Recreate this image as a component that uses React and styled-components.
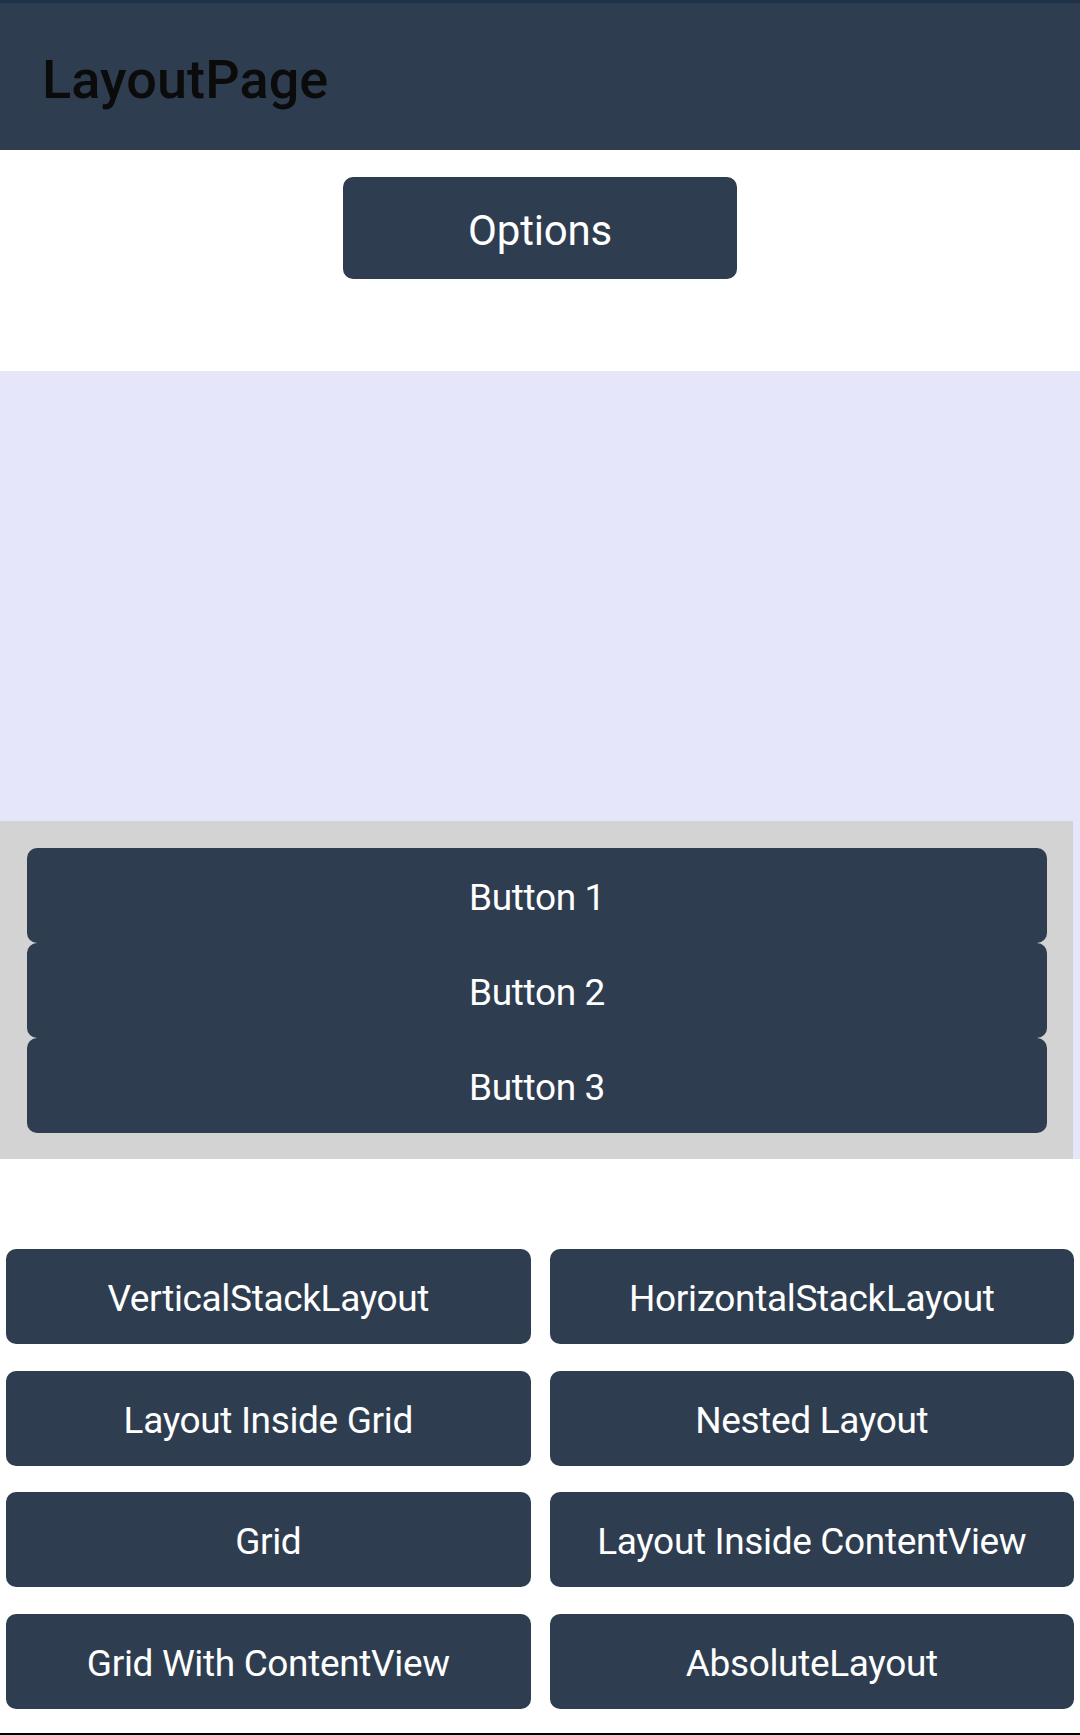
import React from "react";
import styled, { createGlobalStyle } from "styled-components";

const GlobalStyle = createGlobalStyle`
  html, body {
    margin: 0;
    padding: 0;
    background: #ffffff;
    font-family: Roboto, "Noto Sans", "Liberation Sans", sans-serif;
  }
  * { box-sizing: border-box; }
`;

const Page = styled.div`
  width: 1080px;
  height: 1735px;
  display: flex;
  flex-direction: column;
  background: #ffffff;
  overflow: hidden;
`;

const StatusStrip = styled.div`
  height: 3px;
  background: #1d3249;
  flex-shrink: 0;
`;

const Header = styled.header`
  height: 147px;
  flex-shrink: 0;
  background: #2e3e50;
  display: flex;
  align-items: center;
  padding-left: 42px;
  padding-top: 6px;
`;

const Title = styled.h1`
  margin: 0;
  font-size: 54px;
  font-weight: 500;
  color: #0b0b0b;
  letter-spacing: 0.1px;
  line-height: 1;
`;

const OptionsRow = styled.div`
  display: flex;
  justify-content: center;
  padding-top: 27px;
`;

const ActionButton = styled.button`
  border: none;
  margin: 0;
  padding: 4px 0 0 0;
  background: #2e3e50;
  color: #ffffff;
  font-family: Roboto, "Noto Sans", "Liberation Sans", sans-serif;
  font-size: ${(p) => p.$size || 37}px;
  letter-spacing: ${(p) => (p.$size ? "-0.2px" : "-0.35px")};
  font-weight: 400;
  border-radius: 10px;
  height: ${(p) => p.$height || 95}px;
  width: ${(p) => (p.$width ? `${p.$width}px` : "100%")};
  display: flex;
  align-items: center;
  justify-content: center;
  cursor: pointer;
`;

const LavenderPanel = styled.section`
  margin-top: 92px;
  height: 788px;
  background: #e6e6fa;
  display: flex;
  flex-direction: column;
  justify-content: flex-end;
  flex-shrink: 0;
`;

const GrayStack = styled.div`
  width: 1073px;
  background: #d3d3d3;
  padding: 27px 26px 26px 27px;
  display: flex;
  flex-direction: column;
`;

const ButtonGrid = styled.div`
  margin-top: 90px;
  padding: 0 6px;
  display: grid;
  grid-template-columns: 1fr 1fr;
  column-gap: 19px;
  row-gap: 26.5px;
`;

const BottomBar = styled.div`
  margin-top: auto;
  height: 2px;
  background: #000000;
  flex-shrink: 0;
`;

const stackButtons = ["Button 1", "Button 2", "Button 3"];
const gridButtons = [
  "VerticalStackLayout",
  "HorizontalStackLayout",
  "Layout Inside Grid",
  "Nested Layout",
  "Grid",
  "Layout Inside ContentView",
  "Grid With ContentView",
  "AbsoluteLayout",
];

export default function App() {
  return (
    <>
      <GlobalStyle />
      <Page>
        <StatusStrip />
        <Header>
          <Title>LayoutPage</Title>
        </Header>
        <OptionsRow>
          <ActionButton $width={394} $height={102} $size={42}>
            Options
          </ActionButton>
        </OptionsRow>
        <LavenderPanel>
          <GrayStack>
            {stackButtons.map((b) => (
              <ActionButton key={b}>{b}</ActionButton>
            ))}
          </GrayStack>
        </LavenderPanel>
        <ButtonGrid>
          {gridButtons.map((b) => (
            <ActionButton key={b}>{b}</ActionButton>
          ))}
        </ButtonGrid>
        <BottomBar />
      </Page>
    </>
  );
}
